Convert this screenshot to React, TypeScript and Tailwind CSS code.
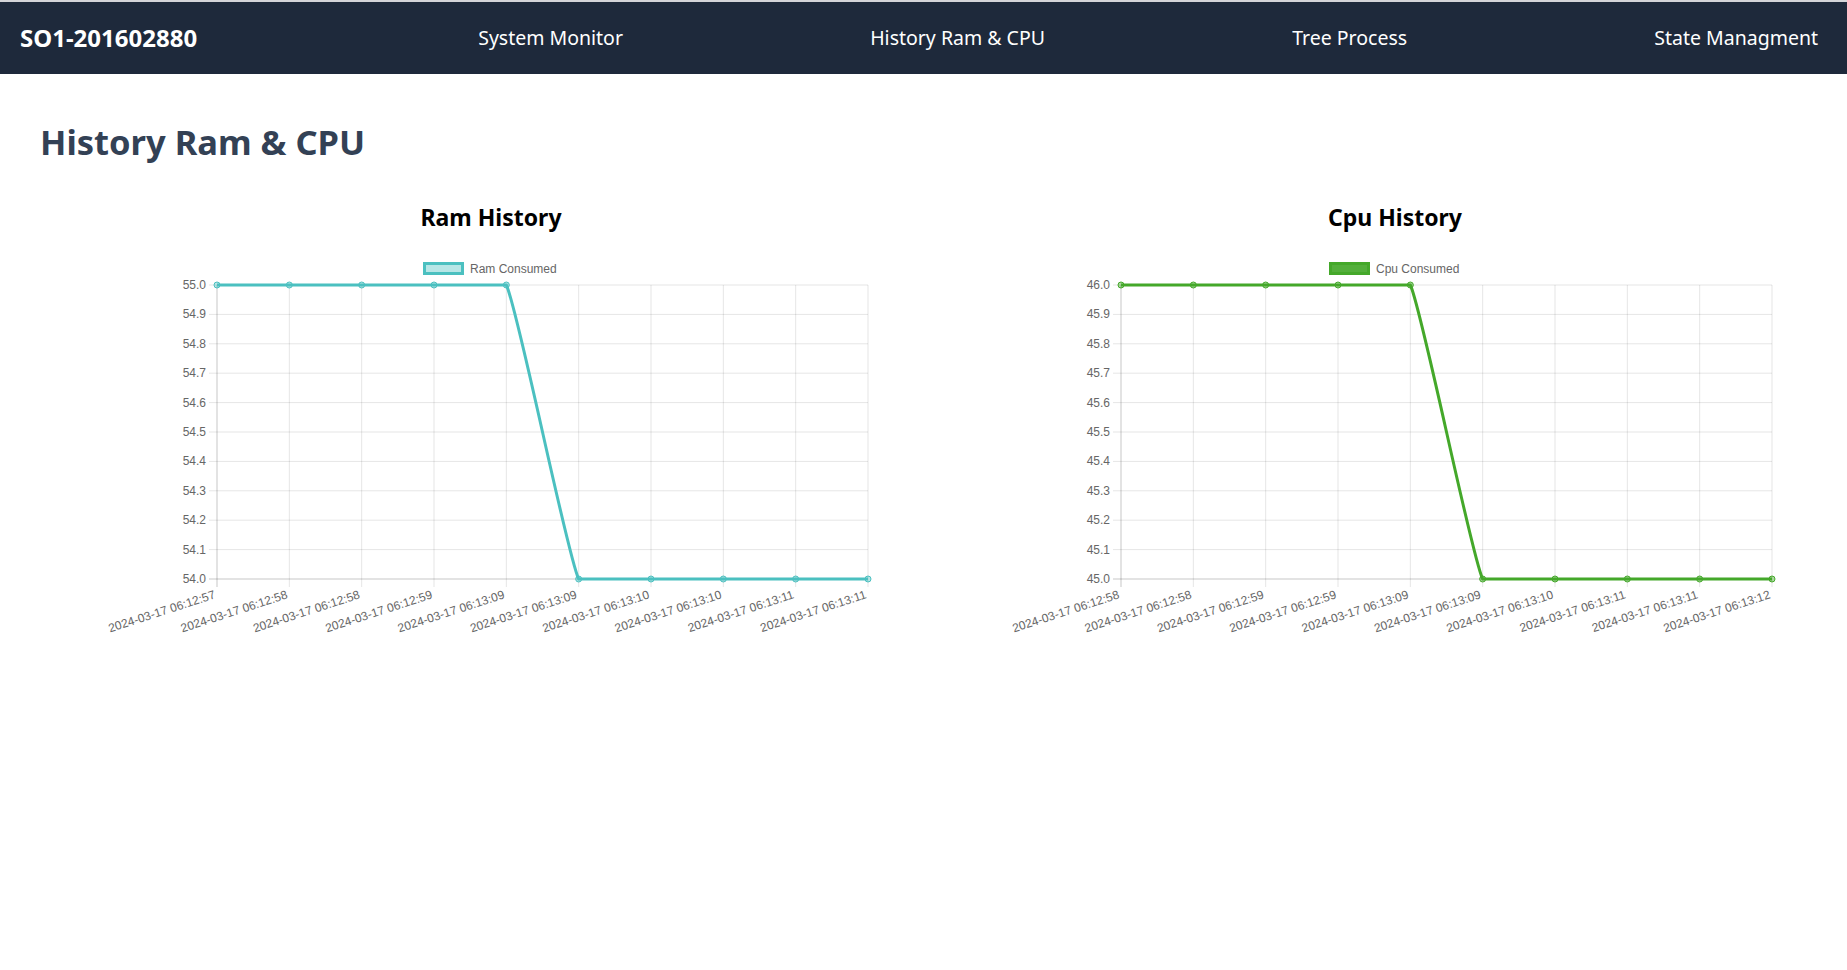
import React from "react";

type Series = {
  title: string;
  legend: string;
  labels: string[];
  values: number[];
  min: number;
  max: number;
  color: string;
  fill: string;
  legendFill: string;
  legendX: number;
};

const ramSeries: Series = {
  title: "Ram History",
  legend: "Ram Consumed",
  labels: [
    "2024-03-17 06:12:57",
    "2024-03-17 06:12:58",
    "2024-03-17 06:12:58",
    "2024-03-17 06:12:59",
    "2024-03-17 06:13:09",
    "2024-03-17 06:13:09",
    "2024-03-17 06:13:10",
    "2024-03-17 06:13:10",
    "2024-03-17 06:13:11",
    "2024-03-17 06:13:11",
  ],
  values: [55, 55, 55, 55, 55, 54, 54, 54, 54, 54],
  min: 54,
  max: 55,
  color: "#4bc0c0",
  fill: "rgba(75,192,192,0.4)",
  legendFill: "rgba(75,192,192,0.4)",
  legendX: 384,
};

const cpuSeries: Series = {
  title: "Cpu History",
  legend: "Cpu Consumed",
  labels: [
    "2024-03-17 06:12:58",
    "2024-03-17 06:12:58",
    "2024-03-17 06:12:59",
    "2024-03-17 06:12:59",
    "2024-03-17 06:13:09",
    "2024-03-17 06:13:09",
    "2024-03-17 06:13:10",
    "2024-03-17 06:13:11",
    "2024-03-17 06:13:11",
    "2024-03-17 06:13:12",
  ],
  values: [46, 46, 46, 46, 46, 45, 45, 45, 45, 45],
  min: 45,
  max: 46,
  color: "#44a82a",
  fill: "rgba(68,168,42,0.45)",
  legendFill: "rgba(68,168,42,0.92)",
  legendX: 386,
};

// plot area inside each chart svg
const LEFT = 178;
const RIGHT = 829;
const TOP = 35;
const BOTTOM = 329;

type Pt = { x: number; y: number };

// same spline as chart.js line with tension, capped to the chart area
function splinePath(pts: Pt[], tension: number) {
  const cps = pts.map((cur, i) => {
    const prev = pts[i - 1] || cur;
    const next = pts[i + 1] || cur;
    const d01 = Math.hypot(cur.x - prev.x, cur.y - prev.y);
    const d12 = Math.hypot(next.x - cur.x, next.y - cur.y);
    let s01 = d01 / (d01 + d12);
    let s12 = d12 / (d01 + d12);
    if (isNaN(s01)) s01 = 0;
    if (isNaN(s12)) s12 = 0;
    const fa = tension * s01;
    const fb = tension * s12;
    const clamp = (v: number) => Math.min(BOTTOM, Math.max(TOP, v));
    return {
      prev: { x: cur.x - fa * (next.x - prev.x), y: clamp(cur.y - fa * (next.y - prev.y)) },
      next: { x: cur.x + fb * (next.x - prev.x), y: clamp(cur.y + fb * (next.y - prev.y)) },
    };
  });
  let d = `M${pts[0].x},${pts[0].y}`;
  for (let i = 1; i < pts.length; i++) {
    const a = cps[i - 1].next;
    const b = cps[i].prev;
    d += ` C${a.x},${a.y} ${b.x},${b.y} ${pts[i].x},${pts[i].y}`;
  }
  return d;
}

function LineChart({ s }: { s: Series }) {
  const step = (RIGHT - LEFT) / (s.values.length - 1);
  const rowH = (BOTTOM - TOP) / 10;
  const pts = s.values.map((v, i) => ({
    x: LEFT + i * step,
    y: BOTTOM - ((v - s.min) / (s.max - s.min)) * (BOTTOM - TOP),
  }));
  const yTicks = Array.from({ length: 11 }, (_, i) => s.max - i * 0.1);

  return (
    <svg width={904} height={400} className="block font-['Liberation_Sans',Arial,sans-serif]">
      {/* legend */}
      <rect x={s.legendX + 1.5} y={13.5} width={38} height={10} fill={s.legendFill} stroke={s.color} strokeWidth={3} />
      <text x={s.legendX + 47} y={23} fontSize={12} fill="#666">
        {s.legend}
      </text>

      {/* horizontal grid */}
      {yTicks.map((t, i) => {
        const y = TOP + i * rowH;
        return (
          <g key={"h" + i}>
            <line x1={LEFT - 8} x2={RIGHT} y1={y} y2={y} stroke="rgba(0,0,0,0.1)" strokeWidth={1} />
            <text x={167} y={y + 4} fontSize={12} fill="#666" textAnchor="end">
              {t.toFixed(1)}
            </text>
          </g>
        );
      })}

      {/* vertical grid + x labels */}
      {pts.map((p, i) => (
        <g key={"v" + i}>
          <line x1={p.x} x2={p.x} y1={TOP} y2={BOTTOM + 8} stroke="rgba(0,0,0,0.1)" strokeWidth={1} />
          <text
            x={p.x - 1}
            y={BOTTOM + 19}
            fontSize={12}
            fill="#666"
            textAnchor="end"
            transform={`rotate(-18 ${p.x - 1} ${BOTTOM + 19})`}
          >
            {s.labels[i]}
          </text>
        </g>
      ))}

      {/* axis borders */}
      <line x1={LEFT} x2={LEFT} y1={TOP} y2={BOTTOM + 8} stroke="rgba(0,0,0,0.12)" />
      <line x1={LEFT - 8} x2={RIGHT} y1={BOTTOM} y2={BOTTOM} stroke="rgba(0,0,0,0.12)" />

      <path d={splinePath(pts, 0.1)} fill="none" stroke={s.color} strokeWidth={3} />
      {pts.map((p, i) => (
        <circle key={"c" + i} cx={p.x} cy={p.y} r={3} fill={s.fill} stroke={s.color} strokeWidth={1} />
      ))}
    </svg>
  );
}

function ChartCard({ s }: { s: Series }) {
  return (
    <div className="flex flex-col items-center">
      <h2 className="mt-[46px] text-[23px] font-bold leading-none text-black">{s.title}</h2>
      <div className="mt-[21px] self-stretch">
        <LineChart s={s} />
      </div>
    </div>
  );
}

export default function App() {
  const links = ["System Monitor", "History Ram & CPU", "Tree Process", "State Managment"];
  return (
    <div className="min-h-screen bg-white font-['Noto_Sans',sans-serif]">
      <nav className="h-[74px] border-t-2 border-[#d4d4d8] bg-[#1e293b] flex items-center pl-[20px] pr-[29px]">
        <span className="text-[24px] font-bold text-white leading-none">SO1-201602880</span>
        <div className="flex-1 flex justify-between pl-[281px]">
          {links.map((l) => (
            <a key={l} href="#" className="text-[19.5px] text-white leading-none">
              {l}
            </a>
          ))}
        </div>
      </nav>

      <main className="pl-[39px]">
        <h1 className="ml-[1px] mt-[51px] text-[34.5px] font-bold leading-none text-[#334155]">History Ram &amp; CPU</h1>
        <div className="grid grid-cols-2">
          <ChartCard s={ramSeries} />
          <ChartCard s={cpuSeries} />
        </div>
      </main>
    </div>
  );
}
